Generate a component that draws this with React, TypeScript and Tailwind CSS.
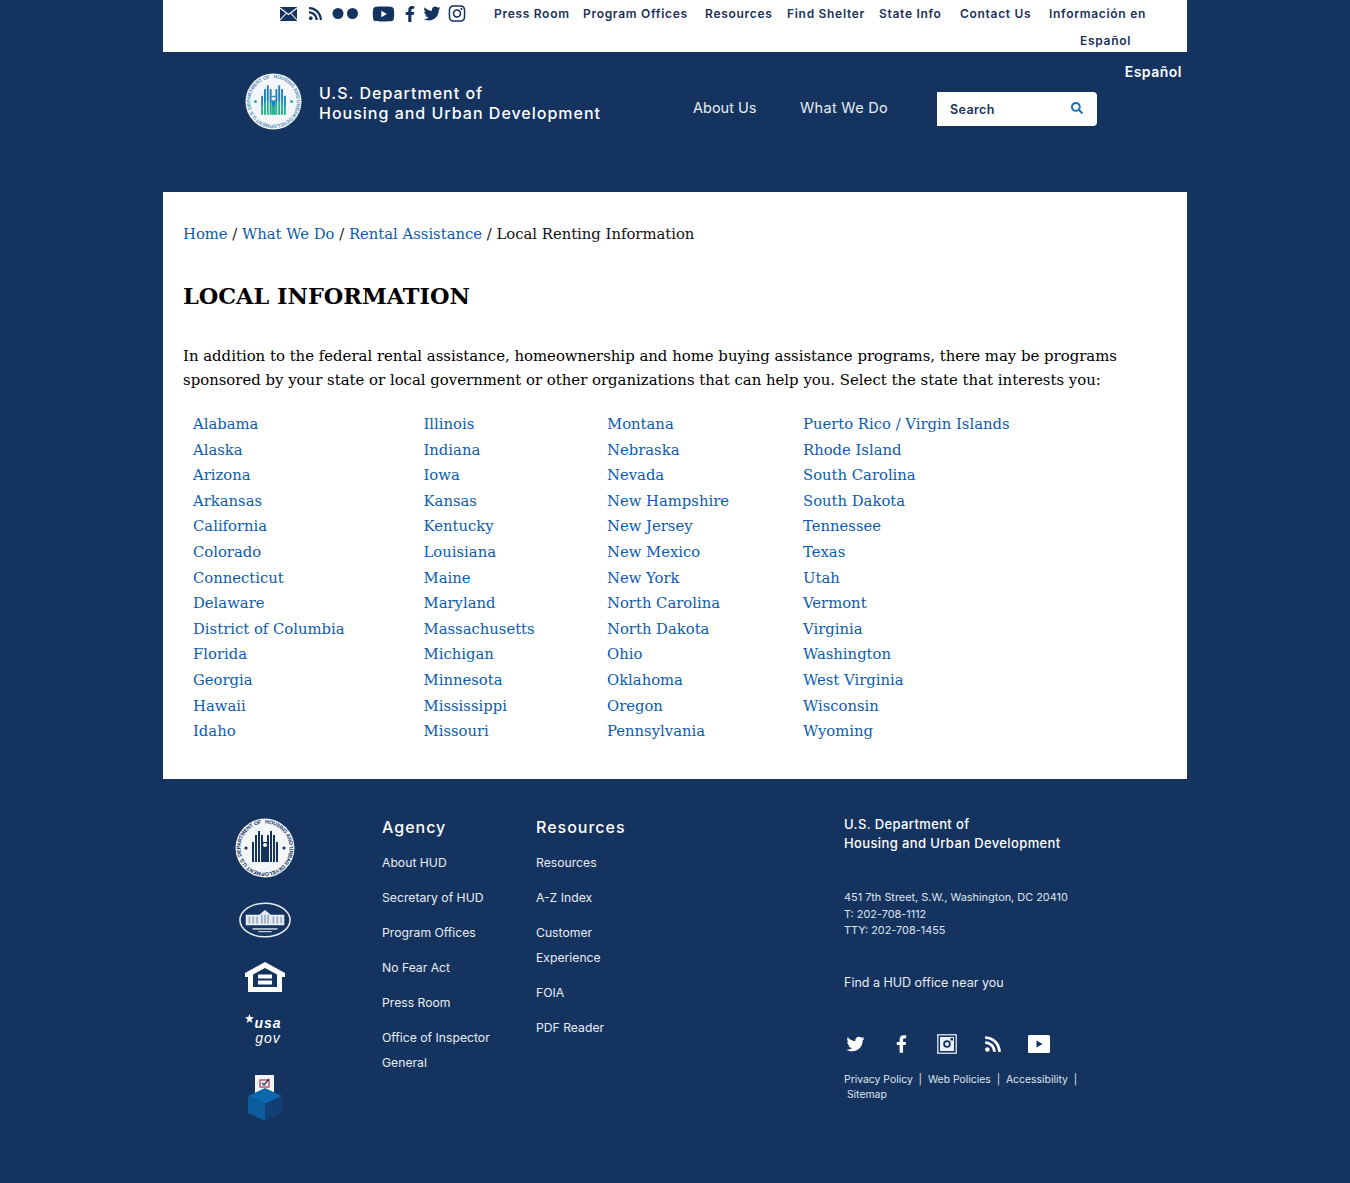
import { FaFacebookF, FaInstagram, FaRss, FaSearch, FaTwitter, FaYoutube } from "react-icons/fa";

const sans = "font-['Inter','Liberation_Sans',sans-serif]";
const serif = "font-['DejaVu_Serif','Liberation_Serif',serif]";

const topLinks = [
  { label: "Press Room", width: "w-[89px]" },
  { label: "Program Offices", width: "w-[122px]" },
  { label: "Resources", width: "w-[82px]" },
  { label: "Find Shelter", width: "w-[92px]" },
  { label: "State Info", width: "w-[81px]" },
  { label: "Contact Us", width: "w-[89px]" },
];

const states = [
  { width: "w-[230.5px]", names: ["Alabama", "Alaska", "Arizona", "Arkansas", "California", "Colorado", "Connecticut", "Delaware", "District of Columbia", "Florida", "Georgia", "Hawaii", "Idaho"] },
  { width: "w-[183.5px]", names: ["Illinois", "Indiana", "Iowa", "Kansas", "Kentucky", "Louisiana", "Maine", "Maryland", "Massachusetts", "Michigan", "Minnesota", "Mississippi", "Missouri"] },
  { width: "w-[196px]", names: ["Montana", "Nebraska", "Nevada", "New Hampshire", "New Jersey", "New Mexico", "New York", "North Carolina", "North Dakota", "Ohio", "Oklahoma", "Oregon", "Pennsylvania"] },
  { width: "w-[300px]", names: ["Puerto Rico / Virgin Islands", "Rhode Island", "South Carolina", "South Dakota", "Tennessee", "Texas", "Utah", "Vermont", "Virginia", "Washington", "West Virginia", "Wisconsin", "Wyoming"] },
];

function Seal({ id, size, top, bottom, ring }: { id: string; size: number; top: string; bottom: string; ring: string }) {
  const xs = [17, 20, 23, 26, 32, 35, 38, 41];
  const tops = [24, 17, 13, 17, 17, 13, 17, 24];
  return (
    <svg width={size} height={size} viewBox="0 0 60 60" className="shrink-0">
      <defs>
        <linearGradient id={`${id}-bars`} x1="0" y1="0" x2="0" y2="1">
          <stop offset="0.45" stopColor={top} />
          <stop offset="0.6" stopColor={bottom} />
        </linearGradient>
        <path id={`${id}-arc`} d="M30 5.500a24.500 24.500 0 1 1-.01 0" />
      </defs>
      <circle cx="30" cy="30" r="29.500" fill="#f4f7fa" />
      <text fontSize="5.300" fill={ring} fontFamily="Liberation Sans, sans-serif" fontWeight="700">
        <textPath href={`#${id}-arc`} startOffset="0" textLength="150">HOUSING AND URBAN DEVELOPMENT U.S. DEPARTMENT OF</textPath>
      </text>
      <g fill={`url(#${id}-bars)`}>
        {xs.map((x, i) => (
          <rect key={x} x={x} y={tops[i]} width="2" height={44 - tops[i]} />
        ))}
        <rect x="28" y="24" width="4" height="20" />
      </g>
      <circle cx="30" cy="27" r="2" fill="#fff" />
      <circle cx="11" cy="30" r="1.600" fill={bottom} />
      <circle cx="49" cy="30" r="1.600" fill={bottom} />
    </svg>
  );
}

function WhiteHouse() {
  return (
    <svg width="52" height="36" viewBox="0 0 54 37">
      <ellipse cx="27" cy="18.500" rx="26" ry="17.500" fill="#15335f" stroke="#e6ebf2" strokeWidth="1.600" />
      <path d="M7 24V13h14l6-5 6 5h14v11z" fill="#e6ebf2" />
      <g fill="#8fa2bd">
        <rect x="10" y="15" width="1.500" height="7" />
        <rect x="14" y="15" width="1.500" height="7" />
        <rect x="18" y="15" width="1.500" height="7" />
        <rect x="23" y="13" width="1.500" height="9" />
        <rect x="26.250" y="13" width="1.500" height="9" />
        <rect x="29.500" y="13" width="1.500" height="9" />
        <rect x="35" y="15" width="1.500" height="7" />
        <rect x="39" y="15" width="1.500" height="7" />
        <rect x="43" y="15" width="1.500" height="7" />
      </g>
      <rect x="14" y="27" width="26" height="1.600" fill="#c9d3e0" />
      <rect x="20" y="30" width="14" height="1.200" fill="#c9d3e0" />
    </svg>
  );
}

function EqualHousing() {
  return (
    <svg width="40" height="30" viewBox="0 0 40 30">
      <path fillRule="evenodd" fill="#fff" d="M20 0 40 11v4h-3v15H3V15H0v-4zM8 12.500V25h24V12.500L20 6z" />
      <rect x="13" y="12.500" width="14" height="4" fill="#fff" />
      <rect x="13" y="18.500" width="14" height="4" fill="#fff" />
    </svg>
  );
}

function BallotBox() {
  return (
    <svg width="36" height="46" viewBox="0 0 36 46">
      <rect x="8" y="0" width="19" height="18" fill="#f3f5f8" />
      <rect x="13" y="5" width="9" height="7" fill="none" stroke="#b0304a" strokeWidth="1.200" />
      <path d="m15 8 2 2 5-6" fill="none" stroke="#15335f" strokeWidth="1.200" />
      <path d="M18 13 35 21 18 29 1 21z" fill="#0d67ad" />
      <path d="M1 21 18 29V46L1 38z" fill="#0d5c9c" />
      <path d="M35 21 18 29V46L35 38z" fill="#103f73" />
    </svg>
  );
}

function FlickrDots() {
  return (
    <svg width="27" height="11" viewBox="0 0 27 11">
      <circle cx="6" cy="5.500" r="5.500" fill="#15335f" />
      <circle cx="20.500" cy="5.500" r="5.500" fill="#15335f" />
    </svg>
  );
}

function MailIcon() {
  return (
    <svg width="17" height="14" viewBox="0 0 17 14">
      <rect width="17" height="14" fill="#15335f" />
      <path d="M0 1l8.500 6.500L17 1M0 13l6-6.500M17 13l-6-6.500" fill="none" stroke="#fff" strokeWidth="1.100" />
    </svg>
  );
}

function SquareCamera() {
  return (
    <svg width="20" height="20" viewBox="0 0 20 20">
      <rect x="0.750" y="0.750" width="18.500" height="18.500" fill="none" stroke="#c4cfdf" strokeWidth="1.500" />
      <rect x="3" y="3" width="14" height="14" fill="#e9eef5" />
      <circle cx="10" cy="10" r="3.800" fill="#15335f" />
      <circle cx="10" cy="10" r="2" fill="#e9eef5" />
      <rect x="13.500" y="4" width="2.500" height="2.500" fill="#15335f" />
    </svg>
  );
}

function PlayBox() {
  return (
    <svg width="22" height="18" viewBox="0 0 22 18">
      <rect width="22" height="18" rx="1.500" fill="#fff" />
      <path d="M8.500 5.500v7l6-3.500z" fill="#15335f" />
    </svg>
  );
}

function FooterColumn({ title, links, width, listWidth }: { title: string; links: string[]; width: string; listWidth: string }) {
  return (
    <div className={width}>
      <h3 className="text-[16px] leading-[26px] font-medium tracking-[1px] text-white">{title}</h3>
      <ul className={`mt-[10px] flex flex-col gap-[10px] ${listWidth}`}>
        {links.map((link) => (
          <li key={link} className="text-[12.200px] leading-[25px] text-[#e8edf4]">{link}</li>
        ))}
      </ul>
    </div>
  );
}

export default function App() {
  return (
    <div className={`min-h-[1183px] bg-[#15335f] ${sans}`}>
      <div className="mx-auto w-[1024px]">
        {/* utility bar */}
        <div className="flex h-[52px] items-start bg-white pl-[117px]">
          <div className="flex h-[27px] w-[214px] items-center text-[#15335f]">
            <MailIcon />
            <FaRss className="ml-[11px] h-[15px] w-[15px]" />
            <span className="ml-[9px]"><FlickrDots /></span>
            <FaYoutube className="ml-[13px] h-[20px] w-[23px]" />
            <FaFacebookF className="ml-[10px] h-[16px] w-[10px]" />
            <FaTwitter className="ml-[8px] h-[17px] w-[18px]" />
            <FaInstagram className="ml-[7px] h-[19px] w-[18px]" />
          </div>
          <nav className="flex flex-1 text-[12px] leading-[27px] font-semibold tracking-[0.7px] text-[#1c3158]">
            {topLinks.map((link) => (
              <a key={link.label} className={`${link.width} whitespace-nowrap`}>{link.label}</a>
            ))}
            <a className="w-[114px] whitespace-nowrap">
              Información en
              <span className="block pl-[31px]">Español</span>
            </a>
          </nav>
        </div>

        {/* masthead */}
        <header className="flex h-[140px] items-start pl-[82px] text-white">
          <div className="mt-[21px] flex w-[448px] items-center gap-[17px]">
            <Seal id="head" size={57} top="#1b7fc0" bottom="#2bb08f" ring="#5b8fb8" />
            <div className="pt-[2px] text-[16px] leading-[20px] font-medium tracking-[1px]">
              U.S. Department of<br />Housing and Urban Development
            </div>
          </div>
          <a className="mt-[46px] w-[107px] text-[14.500px] leading-[20px] text-[#e8edf4]">About Us</a>
          <a className="mt-[46px] w-[137px] text-[14.500px] leading-[20px] tracking-[0.3px] text-[#e8edf4]">What We Do</a>
          <form className="mt-[40px] flex h-[34px] w-[160px] items-center rounded-r-[4px] bg-white">
            <span className="w-[120px] pt-[2px] pl-[13px] text-[12.500px] font-semibold tracking-[0.4px] text-[#1c3158]">Search</span>
            <span className="flex h-full w-[40px] items-start justify-center pt-[10px] text-[#1a6fb5]">
              <FaSearch className="h-[12px] w-[12px]" />
            </span>
          </form>
          <a className="mt-[10px] ml-auto pr-[5px] text-[14px] leading-[20px] font-semibold tracking-[0.5px]">Español</a>
        </header>

        {/* main content */}
        <main className={`h-[587px] bg-white px-[20px] pt-[30px] text-black ${serif}`}>
          <p className="text-[14.800px] leading-[24px] text-[#111]">
            <a className="text-[#0b5cad]">Home</a> / <a className="text-[#0b5cad]">What We Do</a> / <a className="text-[#0b5cad]">Rental Assistance</a> / Local Renting Information
          </p>
          <h1 className="mt-[35px] text-[22.400px] leading-[30px] font-bold">LOCAL INFORMATION</h1>
          <p className="mt-[33px] w-[960px] text-[14.900px] leading-[24px]">
            In addition to the federal rental assistance, homeownership and home buying assistance programs, there may be programs sponsored by your state or local government or other organizations that can help you. Select the state that interests you:
          </p>
          <div className="mt-[19px] flex pl-[10px]">
            {states.map((col) => (
              <ul key={col.names[0]} className={col.width}>
                {col.names.map((name) => (
                  <li key={name} className="text-[14.800px] leading-[25.600px] whitespace-nowrap text-[#0b5cad]">{name}</li>
                ))}
              </ul>
            ))}
          </div>
        </main>

        {/* footer */}
        <footer className="flex pt-[35px] text-white">
          <div className="flex w-[219px] flex-col items-center pt-[4px] pr-[15px]">
            <Seal id="foot" size={60} top="#15335f" bottom="#15335f" ring="#15335f" />
            <div className="mt-[24px]"><WhiteHouse /></div>
            <div className="mt-[24px]"><EqualHousing /></div>
            <div className="relative mt-[24px] flex h-[31px] flex-col items-center pl-[6px] font-['Liberation_Sans',sans-serif] text-[14px] leading-[15px] tracking-[1px] italic">
              <svg width="9" height="9" viewBox="0 0 10 10" className="absolute top-[-2px] left-[-3px]">
                <path d="M5 0l1.300 3.300L10 3.700 7.100 6l1 4L5 7.700 1.900 10l1-4L0 3.700l3.700-.4z" fill="#fff" />
              </svg>
              <span className="font-bold">usa</span>
              <span className="font-normal">gov</span>
            </div>
            <div className="mt-[28px]"><BallotBox /></div>
          </div>
          <FooterColumn title="Agency" width="w-[154px]" listWidth="w-[124px]" links={["About HUD", "Secretary of HUD", "Program Offices", "No Fear Act", "Press Room", "Office of Inspector General"]} />
          <FooterColumn title="Resources" width="w-[308px]" listWidth="w-[100px]" links={["Resources", "A-Z Index", "Customer Experience", "FOIA", "PDF Reader"]} />
          <div className="w-[240px] pt-[1px]">
            <div className="text-[13px] leading-[19px] font-medium tracking-[0.38px]">U.S. Department of<br />Housing and Urban Development</div>
            <address className="mt-[36px] text-[10.900px] leading-[16.500px] text-[#dfe5ee] not-italic">
              451 7th Street, S.W., Washington, DC 20410<br />T: 202-708-1112<br />TTY: 202-708-1455
            </address>
            <p className="mt-[34px] text-[12.500px] leading-[20px] text-[#e8edf4]">Find a HUD office near you</p>
            <div className="mt-[40px] flex h-[22px] items-center gap-[24px]">
              <span className="flex w-[22px] justify-center"><FaTwitter className="h-[18px] w-[19px]" /></span>
              <span className="flex w-[22px] justify-center"><FaFacebookF className="h-[18px] w-[11px]" /></span>
              <span className="flex w-[22px] justify-center"><SquareCamera /></span>
              <span className="flex w-[22px] justify-center"><FaRss className="h-[18px] w-[18px]" /></span>
              <span className="flex w-[22px] justify-center"><PlayBox /></span>
            </div>
            <p className="mt-[17px] text-[10.400px] leading-[15px] text-[#dfe5ee]">
              Privacy Policy &nbsp;|&nbsp; Web Policies &nbsp;|&nbsp; Accessibility &nbsp;|<br />&nbsp;Sitemap
            </p>
          </div>
        </footer>
      </div>
    </div>
  );
}
